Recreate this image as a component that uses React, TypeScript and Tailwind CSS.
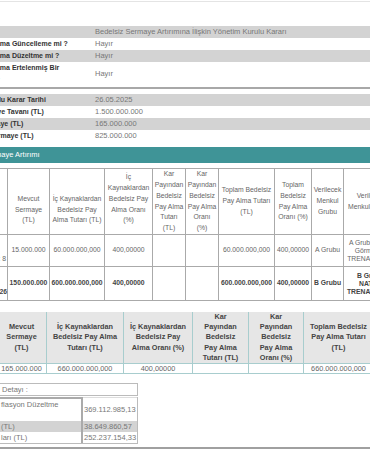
import React from 'react'

const topRows = [
  { label: 'Özet Bilgi', value: 'Bedelsiz Sermaye Artırımına İlişkin Yönetim Kurulu Kararı', gray: true },
  { label: 'Yapılan Açıklama Güncelleme mi ?', value: 'Hayır', gray: false },
  { label: 'Yapılan Açıklama Düzeltme mi ?', value: 'Hayır', gray: true },
  { label: 'Yapılan Açıklama Ertelenmiş Bir Açıklama mı ?', value: 'Hayır', gray: false },
]

const kararRows = [
  { label: 'Yönetim Kurulu Karar Tarihi', value: '26.05.2025', gray: true },
  { label: 'Kayıtlı Sermaye Tavanı (TL)', value: '1.500.000.000', gray: false },
  { label: 'Mevcut Sermaye (TL)', value: '165.000.000', gray: true },
  { label: 'Ulaşılacak Sermaye (TL)', value: '825.000.000', gray: false },
]

function InfoRow({ label, value, gray }: { label: string; value: string; gray: boolean }) {
  return (
    <div className={gray ? 'grid grid-cols-[142px_1fr] bg-[#d3d3d3]' : 'grid grid-cols-[142px_1fr]'}>
      <div className="pr-[10px] text-[7px] font-bold text-[#333]">{label}</div>
      <div className="self-center">{value}</div>
    </div>
  )
}

const head = 'border border-[#aaa] p-0 text-center leading-[10.7px] font-normal'
const cell = 'border border-[#aaa] px-0 py-0 text-center align-middle'

const sumHead = 'border-x border-[#a8cdce] px-0 text-center align-middle font-bold text-[#444]'
const sumCell = 'border border-[#a8cdce] px-0 text-center align-middle'

export default function App() {
  return (
    <div className="w-[370px] h-[450px] overflow-hidden bg-white font-['Liberation_Sans',Arial,sans-serif] text-[#777]">
      <div className="-ml-[47px] w-[470px]">
        {/* özet */}
        <div className="mt-px border-t border-[#e4e4e4] border-b-2 border-b-[#a8a8a8] pt-[24px] pb-px text-[7.5px] leading-[12px]">
          {topRows.map((r) => (
            <InfoRow key={r.label} {...r} />
          ))}
        </div>

        {/* karar */}
        <div className="mt-[5px] text-[7.5px] leading-[12px]">
          {kararRows.map((r) => (
            <InfoRow key={r.label} {...r} />
          ))}
        </div>

        <div className="mt-[5px] h-[16px] bg-[#3f9497] text-[7.5px] leading-[16px] text-white">
          Bedelsiz Sermaye Artırımı
        </div>
      </div>

      <table className="mt-[5px] -ml-[55px] w-[472px] min-w-[472px] table-fixed border-collapse text-[6.8px] text-[#666]">
        <colgroup>
          <col className="w-[62px]" />
          <col className="w-[42px]" />
          <col className="w-[55px]" />
          <col className="w-[48px]" />
          <col className="w-[33px]" />
          <col className="w-[33px]" />
          <col className="w-[56px]" />
          <col className="w-[37px]" />
          <col className="w-[32px]" />
          <col className="w-[74px]" />
        </colgroup>
        <thead>
          <tr className="h-[66px]">
            <th className={head + ' align-middle'}>Pay<br />Grubu</th>
            <th className={head + ' align-bottom pb-[8px]'}>Mevcut<br />Sermaye<br />(TL)</th>
            <th className={head + ' align-bottom pb-[8px]'}>İç Kaynaklardan<br />Bedelsiz Pay<br />Alma Tutarı (TL)</th>
            <th className={head + ' align-bottom pb-[8px]'}>İç<br />Kaynaklardan<br />Bedelsiz Pay<br />Alma Oranı<br />(%)</th>
            <th className={head + ' align-middle'}>Kar<br />Payından<br />Bedelsiz<br />Pay Alma<br />Tutarı<br />(TL)</th>
            <th className={head + ' align-middle'}>Kar<br />Payından<br />Bedelsiz<br />Pay Alma<br />Oranı<br />(%)</th>
            <th className={head + ' align-middle'}>Toplam Bedelsiz<br />Pay Alma Tutarı<br />(TL)</th>
            <th className={head + ' align-middle'}>Toplam<br />Bedelsiz<br />Pay Alma<br />Oranı (%)</th>
            <th className={head + ' align-middle'}>Verilecek<br />Menkul<br />Grubu</th>
            <th className={head + ' align-middle pr-[20px]'}>Verilecek<br />Menkul Kıymet</th>
          </tr>
        </thead>
        <tbody>
          <tr className="h-[32px]">
            <td className={cell + ' leading-[8px]'}>
              A<br />Nama
              <span className="block pr-px text-right">Sıra No: 8</span>
            </td>
            <td className={cell}>15.000.000</td>
            <td className={cell}>60.000.000,000</td>
            <td className={cell}>400,00000</td>
            <td className={cell}></td>
            <td className={cell}></td>
            <td className={cell}>60.000.000,000</td>
            <td className={cell}>400,00000</td>
            <td className={cell}>A Grubu</td>
            <td className={cell + ' leading-[8px] pr-[20px]'}>A Grubu İşlem<br />Görmeyen<br />TRENATN0018</td>
          </tr>
          <tr className="h-[34px] font-bold text-[#444]">
            <td className={cell + ' leading-[8px]'}>
              B<br />Nama
              <span className="block text-right">Sıra No: 26</span>
            </td>
            <td className={cell}>150.000.000</td>
            <td className={cell}>600.000.000,000</td>
            <td className={cell}>400,00000</td>
            <td className={cell}></td>
            <td className={cell}></td>
            <td className={cell}>600.000.000,000</td>
            <td className={cell}>400,00000</td>
            <td className={cell}>B Grubu</td>
            <td className={cell + ' leading-[8px] pr-[20px]'}>B Grubu<br />NATEN<br />TRENATN0026</td>
          </tr>
        </tbody>
      </table>

      {/* toplam */}
      <table className="mt-[11px] -ml-[4px] w-[377px] min-w-[377px] table-fixed border-collapse text-[7.3px] text-[#666]">
        <colgroup>
          <col className="w-[50px]" />
          <col className="w-[77px]" />
          <col className="w-[69px]" />
          <col className="w-[56px]" />
          <col className="w-[55px]" />
          <col className="w-[70px]" />
        </colgroup>
        <thead>
          <tr className="h-[49px] bg-[#e6e6e6] leading-[10.2px]">
            <th className={sumHead}>Mevcut<br />Sermaye<br />(TL)</th>
            <th className={sumHead}>İç Kaynaklardan<br />Bedelsiz Pay Alma<br />Tutarı (TL)</th>
            <th className={sumHead}>İç Kaynaklardan<br />Bedelsiz Pay<br />Alma Oranı (%)</th>
            <th className={sumHead}>Kar<br />Payından<br />Bedelsiz<br />Pay Alma<br />Tutarı (TL)</th>
            <th className={sumHead}>Kar<br />Payından<br />Bedelsiz<br />Pay Alma<br />Oranı (%)</th>
            <th className={sumHead}>Toplam Bedelsiz<br />Pay Alma Tutarı<br />(TL)</th>
          </tr>
        </thead>
        <tbody>
          <tr className="h-[10px] leading-[9px]">
            <td className={sumCell}>165.000.000</td>
            <td className={sumCell}>660.000.000,000</td>
            <td className={sumCell}>400,00000</td>
            <td className={sumCell}></td>
            <td className={sumCell}></td>
            <td className={sumCell}>660.000.000,000</td>
          </tr>
        </tbody>
      </table>

      {/* detay */}
      <div className="mt-[9px] -ml-px w-[139px] text-[7.5px] leading-[11px]">
        <div className="border border-[#bbb] pl-[2px]">Detayı :</div>
        <div className="mt-px border-r border-b border-[#bbb]">
          <div className="grid grid-cols-[84px_1fr]">
            <div className="h-[24px] border-t-2 border-r-2 border-[#aaa] pl-[2px]">flasyon Düzeltme</div>
            <div className="flex items-center overflow-hidden whitespace-nowrap border-t border-[#ddd] pl-px">369.112.985,13</div>
          </div>
          <div className="grid grid-cols-[84px_1fr] bg-[#d3d3d3]">
            <div className="border-r-2 border-[#aaa] pl-[2px]">(TL)</div>
            <div className="pl-px">38.649.860,57</div>
          </div>
          <div className="grid grid-cols-[84px_1fr]">
            <div className="border-r-2 border-[#aaa] pl-[2px]">ları (TL)</div>
            <div className="pl-px">252.237.154,33</div>
          </div>
        </div>
      </div>

      <div className="mt-[3px] border-t-2 border-[#a0a0a0]" />
    </div>
  )
}
